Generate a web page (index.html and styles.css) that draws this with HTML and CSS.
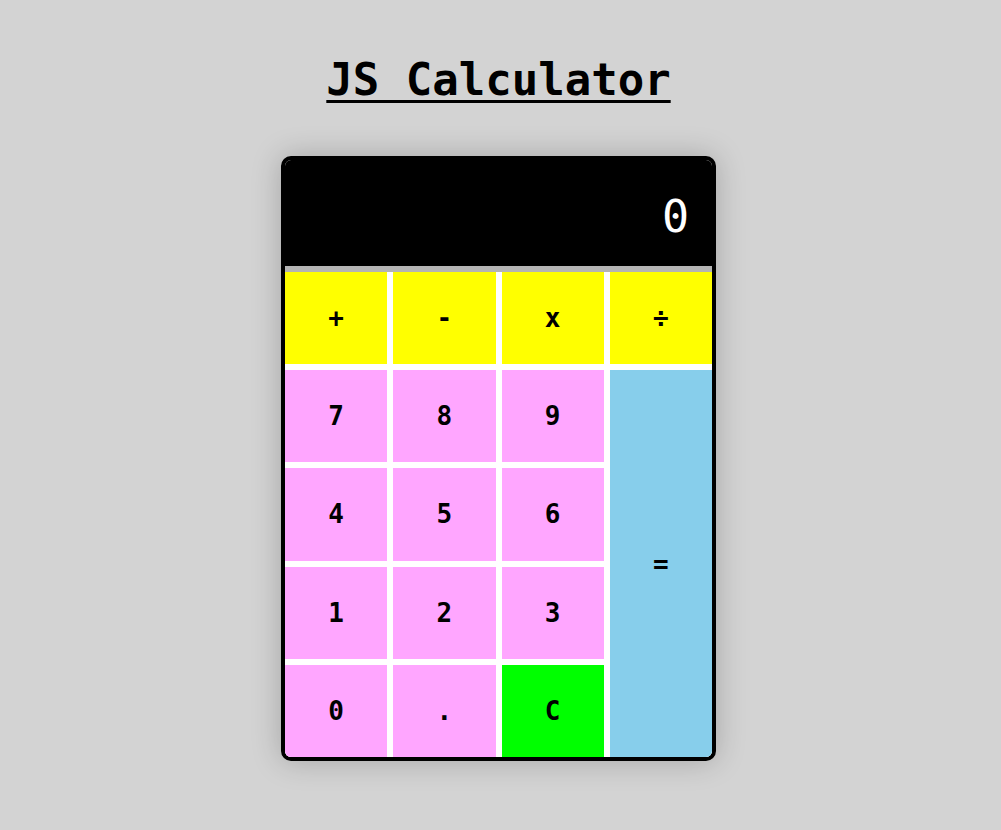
FILE: index.html
```html
<!DOCTYPE html>
<html lang="en">
<head>
<meta charset="utf-8">
<title>JS Calculator</title>
<link rel="stylesheet" href="styles.css">
</head>
<body>
<h1 class="title">JS Calculator</h1>
<div class="calc">
  <div class="display"><span class="value">0</span></div>
  <div class="keys">
    <button class="key op">+</button>
    <button class="key op">-</button>
    <button class="key op">x</button>
    <button class="key op">÷</button>
    <button class="key num">7</button>
    <button class="key num">8</button>
    <button class="key num">9</button>
    <button class="key eq">=</button>
    <button class="key num">4</button>
    <button class="key num">5</button>
    <button class="key num">6</button>
    <button class="key num">1</button>
    <button class="key num">2</button>
    <button class="key num">3</button>
    <button class="key num">0</button>
    <button class="key num">.</button>
    <button class="key clear">C</button>
  </div>
</div>
</body>
</html>
```
FILE: styles.css
```css
html, body {
  margin: 0;
  padding: 0;
}
html {
  background: #d3d3d3;
}
body {
  min-height: 830px;
  font-family: "DejaVu Sans Mono", "Liberation Mono", monospace;
  color: #000;
  padding-right: 4px;
  overflow: hidden;
}
.title {
  margin: 54px 0 0;
  font-size: 44px;
  font-weight: bold;
  line-height: normal;
  text-align: center;
  text-decoration: underline;
  text-decoration-thickness: 3px;
  text-underline-offset: 5px;
}
.calc {
  width: 427px;
  margin: 51px auto 0;
  border: 4px solid #000;
  border-radius: 10px;
  overflow: hidden;
  background: #fff;
  box-shadow: 0 0 30px rgba(0, 0, 0, 0.22);
}
.display {
  height: 112px;
  box-sizing: border-box;
  background: #000;
  border-bottom: 6px solid #b4b4b4;
  display: flex;
  align-items: center;
  justify-content: flex-end;
  padding: 6px 23px 0 0;
}
.value {
  color: #fff;
  font-size: 45px;
}
.keys {
  display: grid;
  grid-template-columns: repeat(4, 1fr);
  grid-template-rows: repeat(5, 1fr);
  gap: 6px;
  background: #fff;
  height: 485px;
}
.key {
  border: 0;
  margin: 0;
  padding: 0;
  font-family: inherit;
  font-size: 26px;
  font-weight: bold;
  color: #000;
  cursor: pointer;
}
.op { background: #ffff00; }
.num { background: #ffa6ff; }
.eq {
  background: #87ceeb;
  grid-column: 4;
  grid-row: 2 / span 4;
}
.clear { background: #00ff00; }
```
